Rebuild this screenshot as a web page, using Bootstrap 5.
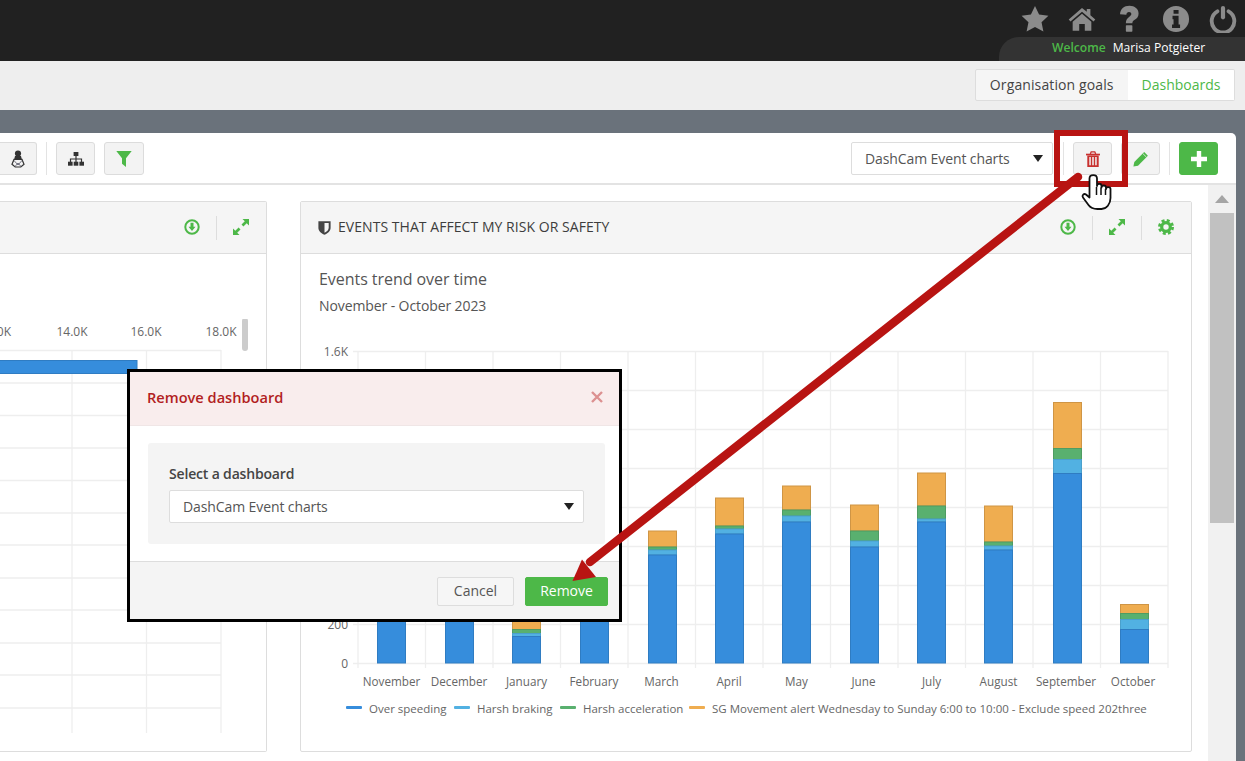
<!DOCTYPE html>
<html lang="en">
<head>
<meta charset="utf-8">
<title>Dashboards</title>
<link href="https://cdn.jsdelivr.net/npm/bootstrap@5.3.0/dist/css/bootstrap.min.css" rel="stylesheet">
<style>
html,body{height:761px;overflow:hidden}
body{position:relative;width:1245px;background:#6a727b;font-family:"Open Sans",sans-serif;font-size:14px;color:#555}
.top-strip{height:61px;background:#212121}
.top-icons{height:37px;gap:19px;padding-right:8px}
.top-icons svg{width:28px;height:28px;fill:#8b8b8b;display:block}
.welcome-tab{width:246px;height:24px;background:#333;border-top-left-radius:20px;font-size:12.1px;line-height:21px;padding-left:53px;gap:7px;font-weight:600}
.welcome-tab .hello{color:#4db848}
.welcome-tab .who{color:#fff;font-weight:400}
.sub-strip{height:49px;background:#eee;padding:8px 10px 0 0}
.tab-btn{font-size:14px;line-height:20px;padding:5px 13.5px;border:1px solid #ddd;border-radius:2px;background:#f5f5f5;color:#444;height:32px}
.tab-btn.wide{padding:5px 14.5px 5px 14px;letter-spacing:.11px}
.tab-btn.on{background:#fff;color:#4db848;border-left:0}
.tab-btn:hover{background:#f5f5f5;color:#444;border-color:#ddd}
.panel-main{margin-top:23px;width:1236px;height:628px;background:#fff;border-top-right-radius:5px}
.tool-row{height:52px;border-bottom:2px solid #e3e3e3;padding:9px 18px 0 0}
.tool-btn{height:33px;width:39px;padding:0;background:#f3f3f3;border:1px solid #dcdcdc;border-radius:3px;display:flex;align-items:center;justify-content:center}
.tool-btn.stub{width:37px;border-left:0;border-radius:0 3px 3px 0}
.tool-btn.go{background:#4db848;border-color:#4db848}
.tool-btn.spaced{margin-left:9px}
.tool-btn.filter-btn{width:40px;margin-right:auto}
.tool-sep{width:1px;height:33px;background:#e3e3e3;margin:0 9px}
.dash-select{width:202px;height:33px;font-size:14px;letter-spacing:-.1px;color:#555;border:1px solid #ddd;border-radius:2px;padding:0 30px 0 13px;background-color:#fff;background-image:url("data:image/svg+xml,%3Csvg xmlns='http://www.w3.org/2000/svg' width='10' height='7'%3E%3Cpath d='M0 0h10L5 7z' fill='%23222'/%3E%3C/svg%3E");background-size:10px 7px;background-position:right 9px center;background-repeat:no-repeat;font-family:inherit}
.dash-select:focus{box-shadow:none;border-color:#ddd}
.dash-select.top-select{margin-right:1px}
.work-area{height:576px}
.cards-col{width:1208px;padding-top:16px;gap:33px}
.chart-box{height:551px;background:#fff;border:1px solid #ddd;border-radius:2px}
.chart-box.left-box{width:267px;border-left:0;border-radius:0 2px 2px 0}
.chart-box.right-box{width:892px}
.box-head{height:52px;background:#f5f5f5;border-bottom:1px solid #ddd;padding:0 17px}
.box-title{font-size:14px;color:#3d3d3d;font-weight:400;gap:7px;letter-spacing:.05px}
.box-title span{margin-top:-2px}
.head-ic{margin-top:-2px}
.head-sep{width:1px;height:24px;background:#ddd;margin:0 16px}
.left-chart{display:block;margin-top:65px}
.right-body{padding-top:14px}
.chart-title{font-size:16px;line-height:22px;padding-left:18px;color:#555;margin:0;letter-spacing:-.05px}
.chart-sub{font-size:14px;line-height:20px;padding-left:18px;color:#555;margin:6px 0 0;letter-spacing:-.1px}
.right-chart{display:block;margin-top:19px}
.chart-text{font-family:"Open Sans",sans-serif;font-size:12px;fill:#666}
.chart-text.month{font-size:11.7px}
.chart-text.legend-text{font-size:11.5px}
.gridline{stroke:#eee;stroke-width:1.3;fill:none}
.s-blue{fill:#368ddc;stroke:#2f7cc2}
.s-sky{fill:#52b1e2;stroke:#4aa0cc}
.s-green{fill:#59b06f;stroke:#4f9c62}
.s-amber{fill:#efad50;stroke:#cf9545}
.bar-rect{stroke-width:1}
.scroll-rail{width:28px;height:576px;background:#f1f1f1;padding:0 2px}
.scroll-up{height:28px;align-items:center;justify-content:center}
.scroll-thumb{height:310px;background:#c1c1c1}
.mini-thumb{fill:#ccc}
.rm-dialog{position:absolute;left:127px;top:369px;width:495px;height:253px;border:3px solid #000;border-radius:0;background:#fff;font-size:14px;color:#444}
.rm-head{height:54px;background:#f9eded;border-bottom:1px solid #f0e6e6;padding:0 15px 0 17px;border-radius:0}
.rm-title{font-size:14.6px;font-weight:600;color:#b21e22;margin:-2px 0 0}
.rm-x{font-size:0;width:14px;height:14px;padding:0;background:none;border:0;margin-top:-3px}
.rm-body{height:135px;padding:17px 14px 17px 18px}
.rm-well{background:#f4f4f4;border-radius:3px;height:101px;padding:21px 21px 0}
.rm-label{font-weight:600;font-size:14px;line-height:20px;margin:0 0 6px;color:#444;letter-spacing:-.17px}
.rm-well .dash-select{width:415px;padding-left:13px}
.rm-foot{height:58px;background:#f4f4f4;border-top:1px solid #ddd;padding:15px 11px 0 0;gap:11px;border-radius:0}
.rm-cancel,.rm-ok{font-size:14px;line-height:20px;padding:3px 0 5px;height:29px;border-radius:2px;margin:0}
.rm-cancel{width:77px;background:#f6f6f6;border:1px solid #ddd;color:#555}
.rm-ok{width:83px;background:#4db848;border:1px solid #4db848;color:#fff}
.note-layer{position:absolute;left:0;top:0;width:1245px;height:761px;pointer-events:none}
</style>
</head>
<body>
<header class="top-strip d-flex flex-column align-items-end">
  <div class="top-icons d-flex align-items-center">
    <svg viewBox="0 0 24 24"><path d="M12 .8l3.500 7.400 8 1-5.900 5.600 1.600 8L12 18.900l-7.200 3.900 1.600-8L.5 9.200l8-1z"/></svg>
    <svg viewBox="0 0 24 24"><path d="M12 2.600L.6 12.400l1.500 1.800L12 5.700l9.900 8.500 1.500-1.800-4.200-3.600V3.500h-3.100v2.200z"/><path d="M12 7.600l-8 6.800V22h5.600v-5.800h4.800V22H20v-7.600z"/></svg>
    <svg viewBox="0 0 24 24"><path d="M4.300 8C4.500 3.600 7.700.7 12.400.7c4.500 0 7.800 2.700 7.800 6.500 0 2.900-1.500 4.300-3.300 5.500-1.500 1-2 1.600-2 3h-5.600c0-3 1.300-4.500 3-5.700 1.100-.8 1.700-1.300 1.700-2.200 0-1-.8-1.700-2-1.700-1.300 0-2.100.9-2.300 2.300z"/><rect x="9.300" y="17.300" width="5.600" height="5.600" rx=".6"/></svg>
    <svg viewBox="0 0 24 24"><path fill-rule="evenodd" d="M12 .8a11.200 11.200 0 1 0 0 22.400A11.200 11.200 0 0 0 12 .8zM9.900 4.200h4.300v3.300H9.900zM9 9.200h5.200v7.500h1.300v3H8.600v-3h1.300v-4.400H9z"/></svg>
    <svg viewBox="0 0 24 24"><path d="M7.200 5.400a9.700 9.700 0 1 0 9.600 0" fill="none" stroke="#8b8b8b" stroke-width="3.300" stroke-linecap="round"/><rect x="10.200" y=".8" width="3.600" height="11.600" rx="1.800"/></svg>
  </div>
  <div class="welcome-tab d-flex"><span class="hello">Welcome</span><span class="who">Marisa Potgieter</span></div>
</header>
<nav class="sub-strip d-flex justify-content-end">
  <div class="btn-group">
    <button type="button" class="btn tab-btn wide">Organisation goals</button>
    <button type="button" class="btn tab-btn on">Dashboards</button>
  </div>
</nav>
<main class="panel-main">
  <div class="tool-row d-flex">
    <button type="button" class="tool-btn stub" aria-label="Driver">
      <svg width="16" height="18" viewBox="0 0 16 18"><circle cx="8" cy="3.600" r="3.100" fill="#333"/><path d="M5 6h6l.8 3.200H4.200z" fill="#333"/><path d="M2 14.300L4 9.400h8l2 4.900-3.200 2.700H5.200z" fill="#f3f3f3" stroke="#333" stroke-width="1.200"/><path d="M4 10.500L8 15l4-4.500M5 16.500L8 13l3 3.500" fill="none" stroke="#556" stroke-width=".8"/></svg>
    </button>
    <span class="tool-sep"></span>
    <button type="button" class="tool-btn" aria-label="Hierarchy">
      <svg width="16" height="14" viewBox="0 0 16 14"><rect x="5.600" y="0" width="4.800" height="4" fill="#333"/><path d="M8 4v3M2.500 10V7h11v3M8 7v3" fill="none" stroke="#333" stroke-width="1.200"/><rect x="0" y="9.700" width="4.600" height="4" fill="#333"/><rect x="5.700" y="9.700" width="4.600" height="4" fill="#333"/><rect x="11.400" y="9.700" width="4.600" height="4" fill="#333"/></svg>
    </button>
    <button type="button" class="tool-btn spaced filter-btn" aria-label="Filter">
      <svg width="16" height="16" viewBox="0 0 16 16"><path d="M.3 0h15.400L10 7.200V16l-4-3.200V7.200z" fill="#4db848"/></svg>
    </button>
    <select class="form-select dash-select top-select" aria-label="Dashboard"><option>DashCam Event charts</option></select>
    <span class="tool-sep"></span>
    <button type="button" class="tool-btn" aria-label="Delete">
      <svg width="14" height="16" viewBox="0 0 14 16"><path d="M0 2.700h14v1.700H0z" fill="#c8312f"/><path d="M4.300 3L5.200.8h3.600L9.700 3" fill="none" stroke="#c8312f" stroke-width="1.300"/><path fill-rule="evenodd" d="M1.300 4.400h11.400V16H1.300zM3.300 6v8.200h1.500V6zm2.950 0v8.200h1.500V6zm2.950 0v8.200h1.500V6z" fill="#c8312f"/></svg>
    </button>
    <button type="button" class="tool-btn spaced" aria-label="Edit">
      <svg width="16" height="16" viewBox="0 0 16 16"><path d="M11.200 1.100l3.700 3.700L5 14.700.4 15.600l.9-4.600z" fill="#4db848"/><path d="M9.800 2.500l3.700 3.700" stroke="#f3f3f3" stroke-width=".8"/></svg>
    </button>
    <span class="tool-sep"></span>
    <button type="button" class="tool-btn go" aria-label="Add">
      <svg width="16" height="16" viewBox="0 0 16 16"><path d="M5.800 0h4.400v5.800H16v4.400h-5.800V16H5.800v-5.800H0V5.800h5.800z" fill="#fff"/></svg>
    </button>
  </div>
  <div class="work-area d-flex">
    <div class="cards-col d-flex">
      <section class="chart-box left-box">
        <div class="box-head d-flex align-items-center justify-content-end">
          <svg class="head-ic" width="16" height="16" viewBox="0 0 16 16"><circle cx="8" cy="8" r="6.700" fill="none" stroke="#4db848" stroke-width="2"/><path d="M6.500 3.800h3v4h2L8 12 4.500 7.800h2z" fill="#4db848"/></svg>
          <span class="head-sep"></span>
          <svg class="head-ic" width="16" height="16" viewBox="0 0 16 16"><path d="M9.500 0H16v6.500L13.700 4.200 10.400 7.500 8.500 5.600l3.300-3.300zM6.500 16H0V9.500l2.300 2.300 3.300-3.300 1.900 1.900-3.300 3.300z" fill="#4db848"/></svg>
        </div>
        <svg class="left-chart" width="266" height="418" viewBox="0 318 266 418">
          <path class="gridline" d="M0 349.500H221M0 382H221M0 414.500H221M0 447H221M0 479.500H221M0 512H221M0 544H221M0 577H221M0 609H221M0 642H221M0 674H221M0 707H221M72 349V732M146.500 349V732M221 349V732"/>
          <rect class="s-blue bar-rect" x="-2" y="359.500" width="139" height="13"/>
          <text class="chart-text" x="11" y="335" text-anchor="end">0K</text>
          <text class="chart-text" x="72" y="335" text-anchor="middle">14.0K</text>
          <text class="chart-text" x="146" y="335" text-anchor="middle">16.0K</text>
          <text class="chart-text" x="221" y="335" text-anchor="middle">18.0K</text>
          <rect class="mini-thumb" x="242" y="317" width="6" height="33" rx="3"/>
        </svg>
      </section>
      <section class="chart-box right-box">
        <div class="box-head d-flex align-items-center">
          <div class="box-title d-flex align-items-center me-auto">
            <svg width="13" height="15" viewBox="0 0 13 15"><path fill-rule="evenodd" d="M.4 1.200h12.200v6.600c0 3.400-2.700 5.700-6.100 7-3.400-1.300-6.100-3.600-6.100-7zM6.500 3v9.800c2.400-1 4.200-2.700 4.200-5V3z" fill="#444"/></svg>
            <span>EVENTS THAT AFFECT MY RISK OR SAFETY</span>
          </div>
          <svg class="head-ic" width="16" height="16" viewBox="0 0 16 16"><circle cx="8" cy="8" r="6.700" fill="none" stroke="#4db848" stroke-width="2"/><path d="M6.500 3.800h3v4h2L8 12 4.500 7.800h2z" fill="#4db848"/></svg>
          <span class="head-sep"></span>
          <svg class="head-ic" width="16" height="16" viewBox="0 0 16 16"><path d="M9.500 0H16v6.500L13.700 4.200 10.400 7.500 8.500 5.600l3.300-3.300zM6.500 16H0V9.500l2.300 2.300 3.300-3.300 1.900 1.900-3.300 3.300z" fill="#4db848"/></svg>
          <span class="head-sep"></span>
          <svg class="head-ic" width="16" height="16" viewBox="0 0 16 16"><circle cx="8" cy="8" r="4.300" fill="none" stroke="#4db848" stroke-width="3.200"/><circle cx="8" cy="8" r="6.500" fill="none" stroke="#4db848" stroke-width="3" stroke-dasharray="2.900 2.200"/></svg>
        </div>
        <div class="right-body">
          <h3 class="chart-title fw-normal">Events trend over time</h3>
          <p class="chart-sub">November - October 2023</p>
          <svg class="right-chart" width="890" height="390" viewBox="301 335 890 390">
            <path class="gridline" d="M353 351.500H1168M353 390.500H1168M353 429.500H1168M353 468.500H1168M353 507.500H1168M353 546.500H1168M353 585.500H1168M353 624.500H1168M353 663.500H1168M358 351V668M425.500 351V668M493 351V668M560.500 351V668M628 351V668M695.500 351V668M763 351V668M830.500 351V668M898 351V668M965.500 351V668M1033 351V668M1100.500 351V668M1168 351V668"/>
            <text class="chart-text" x="348" y="356" text-anchor="end">1.6K</text>
            <text class="chart-text" x="348" y="629" text-anchor="end">200</text>
            <text class="chart-text" x="348" y="668" text-anchor="end">0</text>
            <g class="bar-rect">
              <rect class="s-blue" x="377.500" y="560" width="28" height="103"/>
              <rect class="s-blue" x="445.500" y="560" width="28" height="103"/>
              <rect class="s-amber" x="512.500" y="560" width="28" height="69.500"/><rect class="s-green" x="512.500" y="629.500" width="28" height="4"/><rect class="s-sky" x="512.500" y="633.500" width="28" height="3"/><rect class="s-blue" x="512.500" y="636.500" width="28" height="26.500"/>
              <rect class="s-blue" x="580.500" y="560" width="28" height="103"/>
              <rect class="s-amber" x="648.500" y="531" width="28" height="16"/><rect class="s-green" x="648.500" y="547" width="28" height="3"/><rect class="s-sky" x="648.500" y="550" width="28" height="5"/><rect class="s-blue" x="648.500" y="555" width="28" height="108"/>
              <rect class="s-amber" x="715.500" y="498" width="28" height="28"/><rect class="s-green" x="715.500" y="526" width="28" height="3"/><rect class="s-sky" x="715.500" y="529" width="28" height="5"/><rect class="s-blue" x="715.500" y="534" width="28" height="129"/>
              <rect class="s-amber" x="782.500" y="486" width="28" height="24"/><rect class="s-green" x="782.500" y="510" width="28" height="6"/><rect class="s-sky" x="782.500" y="516" width="28" height="6"/><rect class="s-blue" x="782.500" y="522" width="28" height="141"/>
              <rect class="s-amber" x="850.500" y="505" width="28" height="26"/><rect class="s-green" x="850.500" y="531" width="28" height="10"/><rect class="s-sky" x="850.500" y="541" width="28" height="6"/><rect class="s-blue" x="850.500" y="547" width="28" height="116"/>
              <rect class="s-amber" x="917.500" y="473" width="28" height="33"/><rect class="s-green" x="917.500" y="506" width="28" height="13"/><rect class="s-sky" x="917.500" y="519" width="28" height="3"/><rect class="s-blue" x="917.500" y="522" width="28" height="141"/>
              <rect class="s-amber" x="984.500" y="506" width="28" height="36"/><rect class="s-green" x="984.500" y="542" width="28" height="4"/><rect class="s-sky" x="984.500" y="546" width="28" height="4"/><rect class="s-blue" x="984.500" y="550" width="28" height="113"/>
              <rect class="s-amber" x="1053.500" y="402.500" width="28" height="46"/><rect class="s-green" x="1053.500" y="448.500" width="28" height="11"/><rect class="s-sky" x="1053.500" y="459.500" width="28" height="14"/><rect class="s-blue" x="1053.500" y="473.500" width="28" height="189.500"/>
              <rect class="s-amber" x="1120.500" y="604.500" width="28" height="9"/><rect class="s-green" x="1120.500" y="613.500" width="28" height="6"/><rect class="s-sky" x="1120.500" y="619.500" width="28" height="10"/><rect class="s-blue" x="1120.500" y="629.500" width="28" height="33.500"/>
            </g>
            <g text-anchor="middle">
              <text class="chart-text month" x="391.500" y="686">November</text>
              <text class="chart-text month" x="459" y="686">December</text>
              <text class="chart-text month" x="526.500" y="686">January</text>
              <text class="chart-text month" x="594" y="686">February</text>
              <text class="chart-text month" x="661.500" y="686">March</text>
              <text class="chart-text month" x="729" y="686">April</text>
              <text class="chart-text month" x="796.500" y="686">May</text>
              <text class="chart-text month" x="863.500" y="686">June</text>
              <text class="chart-text month" x="931.500" y="686">July</text>
              <text class="chart-text month" x="998.500" y="686">August</text>
              <text class="chart-text month" x="1066" y="686">September</text>
              <text class="chart-text month" x="1133" y="686">October</text>
            </g>
            <rect x="346" y="706" width="16" height="3" rx="1" fill="#368ddc"/><text class="chart-text legend-text" x="369" y="713">Over speeding</text>
            <rect x="454" y="706" width="16" height="3" rx="1" fill="#52b1e2"/><text class="chart-text legend-text" x="477" y="713">Harsh braking</text>
            <rect x="560" y="706" width="16" height="3" rx="1" fill="#59b06f"/><text class="chart-text legend-text" x="583" y="713">Harsh acceleration</text>
            <rect x="689" y="706" width="16" height="3" rx="1" fill="#efad50"/><text class="chart-text legend-text" x="712" y="713">SG Movement alert Wednesday to Sunday 6:00 to 10:00 - Exclude speed 202three</text>
          </svg>
        </div>
      </section>
    </div>
    <div class="scroll-rail">
      <div class="scroll-up d-flex"><svg width="14" height="8" viewBox="0 0 14 8"><path d="M7 0l7 8H0z" fill="#a5a5a5"/></svg></div>
      <div class="scroll-thumb"></div>
    </div>
  </div>
</main>
<div class="rm-dialog modal-content">
  <div class="modal-header rm-head d-flex justify-content-between align-items-center">
    <h5 class="rm-title">Remove dashboard</h5>
    <button type="button" class="rm-x" aria-label="Close"><svg width="14" height="14" viewBox="0 0 14 14"><path d="M2 2l10 10M12 2L2 12" stroke="#dc9191" stroke-width="2.400" fill="none"/></svg></button>
  </div>
  <div class="modal-body rm-body">
    <div class="rm-well">
      <label class="rm-label d-block">Select a dashboard</label>
      <select class="form-select dash-select" aria-label="Select a dashboard"><option>DashCam Event charts</option></select>
    </div>
  </div>
  <div class="modal-footer rm-foot d-flex justify-content-end align-items-start">
    <button type="button" class="btn rm-cancel">Cancel</button>
    <button type="button" class="btn rm-ok">Remove</button>
  </div>
</div>
<svg class="note-layer" viewBox="0 0 1245 761">
  <rect x="1057" y="133" width="68" height="51" fill="none" stroke="#b81412" stroke-width="6"/>
  <path d="M1078 177L590 562" stroke="#b81412" stroke-width="8.500" stroke-linecap="round" fill="none"/>
  <path d="M572.500 581L582 559.500 596 577z" fill="#b81412"/>
  <path d="M1097.500 209c-4 0-7-1.200-9-4l-5.500-7.500c-1.500-2 1-4.500 3-3l3.500 3v-19c0-4.500 7.500-4.500 7.500 0v7.500c0-3 4.500-3 4.500 0v1.500c0-2.700 4.500-2.700 4.500 0v1.500c0-2.500 4.500-2.500 4.500 0v9c0 6-4 11-9 11z" fill="#fff" stroke="#111" stroke-width="1.800" stroke-linejoin="round"/>
  <path d="M1096.500 187v8M1101 187.500v7.500M1105.500 189v6" stroke="#111" stroke-width="1.500" fill="none"/>
</svg>
</body>
</html>
